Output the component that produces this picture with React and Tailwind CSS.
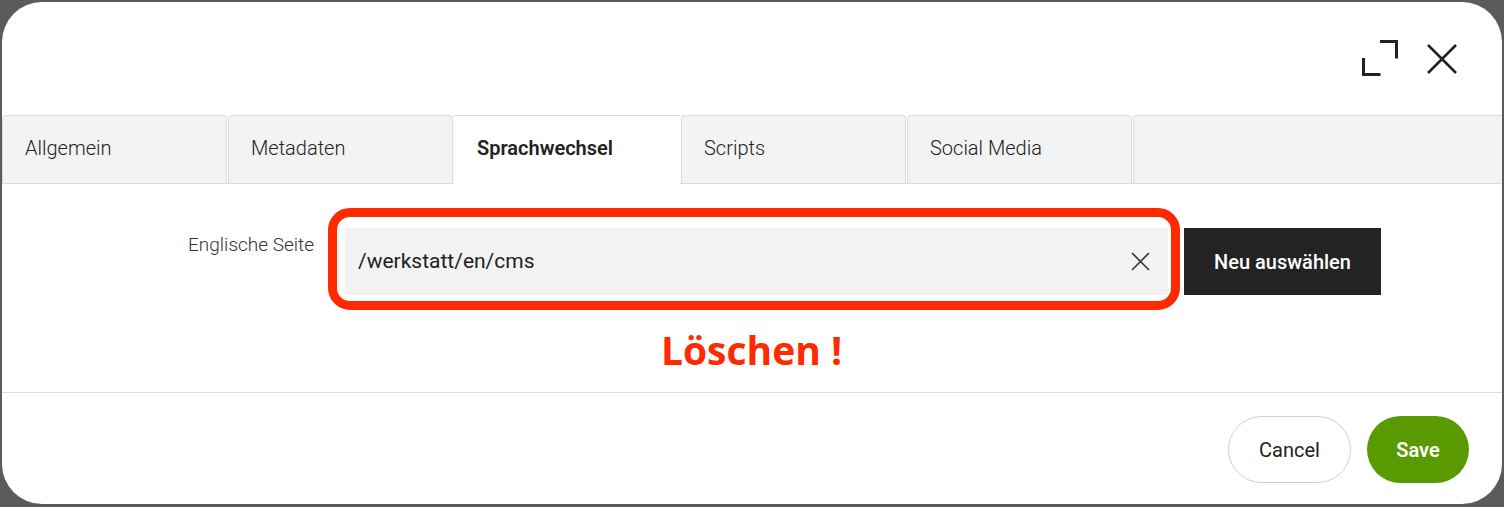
const tabs = ['Allgemein', 'Metadaten', 'Sprachwechsel', 'Scripts', 'Social Media'];

function ExpandIcon() {
  return (
    <svg width="36" height="36" viewBox="0 0 36 36" fill="none" stroke="#222" strokeWidth="3">
      <path d="M18 1.5h16.5v17" />
      <path d="M1.5 18v16.5h17" />
    </svg>
  );
}

function CloseIcon({ size, stroke, color }) {
  return (
    <svg width={size} height={size} viewBox={`0 0 ${size} ${size}`} fill="none" stroke={color} strokeWidth={stroke}>
      <path d={`M1 1L${size - 1} ${size - 1}M${size - 1} 1L1 ${size - 1}`} />
    </svg>
  );
}

export default function App() {
  return (
    <div className="w-[1504px] h-[507px] bg-[#5b5b5b] p-[2px] font-['Roboto',sans-serif]">
      <div className="relative w-[1500px] h-[502px] bg-white rounded-[40px] overflow-hidden flex flex-col">
        {/* header */}
        <div className="h-[113px] flex items-start justify-end gap-[29px] pr-[45px] pt-[38px]">
          <button className="w-[36px] h-[36px]">
            <ExpandIcon />
          </button>
          <button className="w-[30px] h-[30px] mt-[4px]">
            <CloseIcon size={30} stroke={2.6} color="#222" />
          </button>
        </div>

        {/* tabs */}
        <div className="flex h-[69px] border-b border-[#dcdcdc] gap-[1px]">
          {tabs.map((t) => {
            const active = t === 'Sprachwechsel';
            return (
              <div
                key={t}
                className={
                  active
                    ? 'w-[226px] h-[69px] bg-white border-t border-[#dcdcdc] flex items-center pl-[23px] pb-[4px] text-[20px] font-semibold text-[#222]'
                    : 'w-[225px] h-[68px] bg-[#f3f3f3] border border-b-0 border-[#dcdcdc] rounded-t-[4px] flex items-center pl-[22px] pb-[3px] text-[20px] font-light text-[#222]'
                }
              >
                {t}
              </div>
            );
          })}
          <div className="flex-1 h-[68px] bg-[#f3f3f3] border border-b-0 border-r-0 border-[#dcdcdc] rounded-tl-[4px]" />
        </div>

        {/* content */}
        <div className="h-[209px] border-b border-[#dcdcdc] pt-[44px]">
          <div className="flex items-start">
            <div className="w-[312px] text-right text-[19px] font-light text-[#333] pt-[3px]">
              Englische Seite
            </div>
            <div className="ml-[31px] w-[823px] h-[67px] bg-[#f3f3f3] flex items-center justify-between pl-[13px] pr-[18px]">
              <span className="text-[21px] text-[#222]">/werkstatt/en/cms</span>
              <CloseIcon size={19} stroke={1.6} color="#333" />
            </div>
            <button className="ml-[16px] w-[197px] h-[67px] bg-[#232323] text-white text-[20px] font-medium">
              Neu auswählen
            </button>
          </div>
          <div className="ml-[338px] w-[823px] text-center mt-[33px] text-[39px] leading-[44px] font-bold text-[#ff2a00] font-['Open_Sans',sans-serif]">
            Löschen !
          </div>
        </div>

        {/* footer */}
        <div className="flex-1 flex items-center justify-end gap-[16px] pr-[33px] pt-[2px]">
          <button className="w-[123px] h-[67px] rounded-full border border-[#cfcfcf] text-[20px] text-[#222]">
            Cancel
          </button>
          <button className="w-[102px] h-[67px] rounded-full bg-[#599a00] text-[20px] font-semibold text-white">
            Save
          </button>
        </div>

        {/* annotation overlay */}
        <div className="absolute left-[326px] top-[206px] w-[852px] h-[102px] border-[9px] border-[#ff2a00] rounded-[22px]" />
      </div>
    </div>
  );
}
